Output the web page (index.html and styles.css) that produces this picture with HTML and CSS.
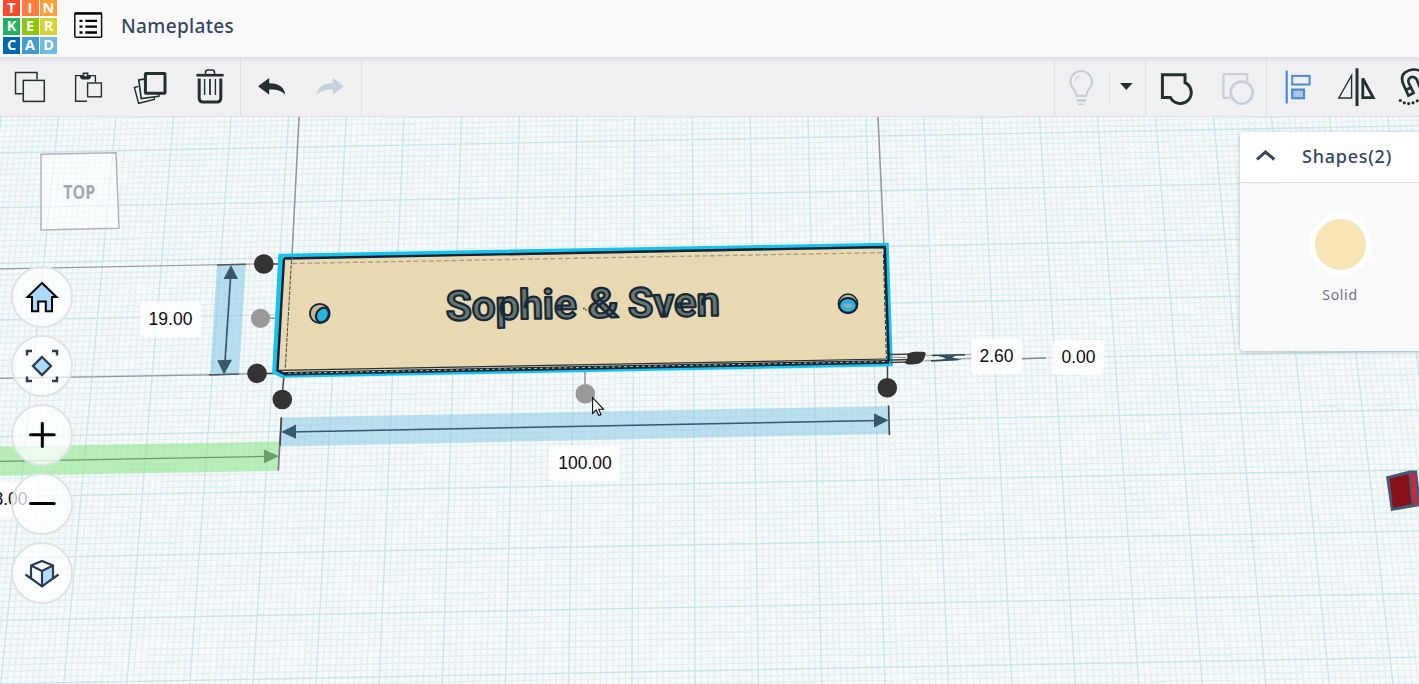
FILE: index.html
```html
<!DOCTYPE html>
<html lang="en">
<head>
<meta charset="utf-8">
<title>Nameplates</title>
<link rel="stylesheet" href="styles.css">
</head>
<body>
<div class="app">
  <header class="topbar">
    <div class="logo">
      <span class="tile t1">T</span><span class="tile t2">I</span><span class="tile t3">N</span>
      <span class="tile t4">K</span><span class="tile t5">E</span><span class="tile t6">R</span>
      <span class="tile t7">C</span><span class="tile t8">A</span><span class="tile t9">D</span>
    </div>
    <svg class="list-icon" width="30" height="28" viewBox="73 11 30 28">
      <rect x="74.8" y="13.2" width="26.8" height="24" rx="1" fill="none" stroke="#111" stroke-width="1.5"/>
      <path d="M74.5 13.5H102" stroke="#000" stroke-width="2.4"/>
      <path d="M79.5 20.8H82.5M79.5 26.7H82.5M79.5 32.5H82.5M85.3 20.8H97M85.3 26.7H97M85.3 32.5H97" stroke="#000" stroke-width="2.3"/>
    </svg>
    <h1 class="title">Nameplates</h1>
  </header>

  <nav class="toolbar">
    <div class="group">
      <svg class="tool" viewBox="0 58 60 58"><g fill="none" stroke="#233030" stroke-width="1.5"><path d="M22.5 93.8H15.5V72.6H37V79.5"/><rect x="23.3" y="80.4" width="21" height="21"/></g></svg>
      <svg class="tool" viewBox="60 58 60 58"><g fill="none" stroke="#233030" stroke-width="1.4"><path d="M87 101.2H75.6V75.6H81M90 75.6H95.4V82.5"/><rect x="87.6" y="83" width="13.8" height="13.8"/></g><path d="M80 75h2.6v-2.6h5.8V75H91v2.5l-2 2h-7l-2-2z" fill="#233030"/><rect x="84.3" y="74" width="2.4" height="2.2" fill="#f0f0f3"/></svg>
      <svg class="tool" viewBox="120 58 60 58"><g fill="none" stroke="#233030"><rect x="145.4" y="73.6" width="19.6" height="19.6" rx=".5" stroke-width="3"/><path d="M144 79.2L138.8 80L141.2 98.5L158.8 96.3V94" stroke-width="1.7"/><path d="M138.5 86.3L134.4 87.5L138.6 103.3L154.3 99.5V97.5" stroke-width="1.4"/></g></svg>
      <svg class="tool" viewBox="180 58 60 58"><g fill="none" stroke="#233030"><path d="M196.4 75.2H223.6" stroke-width="2.7"/><path d="M205.5 74V72.5Q205.5 70 208 70H212Q214.5 70 214.5 72.5V74" stroke-width="1.6"/><path d="M199.2 78.5V98Q199.2 102 203.2 102H216.8Q220.8 102 220.8 98V78.5" stroke-width="3"/><path d="M204.6 79V95M215.4 79V95" stroke-width="1.4"/><path d="M210 79V95" stroke-width="1.8"/></g></svg>
    </div>
    <div class="group">
      <svg class="tool" viewBox="241 58 60 58"><path d="M258 86.3L269.2 78V83.3C278 83 284.6 87 285.2 94.7C281 90 276 89.3 269.2 89.4V94.7Z" fill="#233030"/></svg>
      <svg class="tool" viewBox="301 58 60 58"><path d="M344 86.3L332.8 78V83.3C324 83 317.4 87 316.8 94.7C321 90 326 89.3 332.8 89.4V94.7Z" fill="#c5d0db"/></svg>
    </div>
    <div class="group push">
      <svg class="tool bulb" viewBox="1055 58 54 58"><g fill="none" stroke="#c5d0da" stroke-width="2.2"><path d="M1076.5 95.8H1086.2C1086.2 89.5 1092 89 1092 81.8A10.8 10.8 0 0 0 1070.4 81.8C1070.4 89 1076.5 89.5 1076.5 95.8Z"/><path d="M1074.8 81Q1075.5 77.5 1079.3 76.3" stroke-width="1.4"/><path d="M1076.8 100.5H1085.8" stroke-width="3"/><path d="M1078.2 104.3H1084.2" stroke-width="1.6"/></g></svg>
      <svg class="tool caret" viewBox="1109 58 36 58"><path d="M1120 83H1132.6L1126.3 90Z" fill="#233030"/></svg>
    </div>
    <div class="group">
      <svg class="tool" viewBox="1146 58 60 58"><path d="M1162.4 74.8H1185V82.6A11 11 0 1 1 1170.4 97.4H1162.4Z" fill="none" stroke="#233030" stroke-width="3"/></svg>
      <svg class="tool" viewBox="1206 58 60 58"><g fill="none" stroke="#c5d0da"><path d="M1230 97.8H1223.5V74.2H1247.3V81" stroke-width="2.2"/><circle cx="1241.7" cy="92.6" r="11" stroke-width="2.8"/></g></svg>
    </div>
    <div class="group">
      <svg class="tool" viewBox="1267 58 60 58"><g fill="none" stroke="#4c8ad8"><path d="M1286.7 70.5V103.5" stroke-width="2.2"/><rect x="1292.2" y="75.9" width="17.4" height="8.6" stroke-width="2"/><rect x="1292.2" y="89.6" width="11.8" height="8.6" fill="#adc7ea" stroke-width="2.2"/></g></svg>
      <svg class="tool" viewBox="1327 58 60 58"><g fill="none" stroke="#233030"><path d="M1357 68.3V106" stroke-width="3"/><path d="M1338.8 98H1351.6V75.5Z" stroke-width="1.4"/><path d="M1362.8 97.6V78.5L1373.2 97.6Z" stroke-width="2.8"/></g></svg>
      <svg class="tool" viewBox="1387 58 60 58"><g fill="none" stroke="#233030" stroke-width="2.7"><path d="M1424 73C1416 67.5 1409 69.5 1405 72.5C1401.5 75.5 1401.4 80 1403.4 84.5L1408.4 95.6L1413.6 93L1408.8 83C1407 78 1412.5 74.5 1416.5 79L1421 90"/><path d="M1405.8 90L1411 87.6"/></g><g fill="#233030"><circle cx="1400.3" cy="100.5" r="1.6"/><circle cx="1404.3" cy="102.8" r="1.6"/><circle cx="1408.6" cy="103.6" r="1.6"/><circle cx="1413" cy="102.8" r="1.6"/><circle cx="1417.2" cy="100.8" r="1.6"/></g></svg>
    </div>
  </nav>

  <main class="stage">
    <svg class="scene" viewBox="0 117 1419 567">
      <g fill="none">
        <path id="minor" class="minor"/>
        <path id="major" class="major"/>
      </g>
      <g stroke="#8f9698" stroke-width="1.5" fill="none">
        <path d="M299 117L292 256M878 117L884 246"/>
        <path d="M0 268.8L256 264M0 378.3L212 374.8L250 373.8" stroke="#94999b" stroke-width="1.2"/>
        <path d="M268 318.3H278M585 372V384"/>
      </g>

      <path d="M0 446.5L279.5 441.5L278 470.8L0 475.8Z" fill="#93e78f" fill-opacity=".62"/>
      <path d="M0 461.3L266 456.4" stroke="#6b9d6b" stroke-width="1.3"/>
      <path d="M264 449.5L279 456.3L264 463.3Z" fill="#6b9d6b"/>
      <path d="M281.3 417.5L278.3 470.5" stroke="#777" stroke-width="1.6"/>

      <path d="M217 265L246 264L239 374L210 375Z" fill="#8bcbe6" fill-opacity=".58"/>
      <path d="M217 265L246 264.2M209 375L239 374" stroke="#556" stroke-width="1.5"/>
      <path d="M231 270L224.5 369" stroke="#37596a" stroke-width="1.7"/>
      <path d="M231 265L238 279H223.5ZM224 374.5L217.3 360.3L232 359.8Z" fill="#37596a"/>

      <path d="M282 417.5L889 406L889.5 434L281 446.5Z" fill="#8bcbe6" fill-opacity=".55"/>
      <path d="M290 432L880 420.5" stroke="#37596a" stroke-width="1.6"/>
      <path d="M281.3 432L296 424.5V438.7ZM888.5 420.3L874 413.5V427.5Z" fill="#37596a"/>
      <path d="M281.4 417.5L280 446M888.6 405.5L889.4 435" stroke="#444" stroke-width="1.6"/>

      <path d="M268 264H280M262 373.5H276M284 374L282.5 392M887.5 363V380" stroke="#444" stroke-width="1.5"/>

      <path d="M281 256.5L886 245.5L890 363.5L282 375L275 371.5Z" fill="#e9d9b3" stroke="#19c2ec" stroke-width="5.5"/>
      <path d="M284 373.7L889 361.9" stroke="#172635" stroke-width="3.6"/>
      <path d="M278 370.4L888.5 359" stroke="#2a302e" stroke-width="1.2"/>
      <path d="M282 373.4L888 361.5" stroke="#9bb3a8" stroke-width="1.1" stroke-dasharray="3 3"/>
      <path d="M284 258.5L884.8 247L888.8 361M284 258.5L277.5 370.5L285 374.2" fill="none" stroke="#12202f" stroke-width="2.4"/>
      <path d="M292 263.5L882 252.6" stroke="#a99f86" stroke-width="1.4" stroke-dasharray="5 2.6"/>
      <path d="M291.5 260L285.2 370" stroke="#55544c" stroke-width="1.1" stroke-dasharray="4 1.2"/>
      <path d="M883.4 254L886.4 358" stroke="#27303a" stroke-width="1" stroke-dasharray="4 2"/>
      <path d="M292.4 256L291.5 262" stroke="#777" stroke-width="1"/>

      <g class="engraving">
        <text x="446" y="320.5" textLength="131" lengthAdjust="spacingAndGlyphs" transform="rotate(-1.1 446 321)">Sophie</text>
        <text x="588" y="317.8" textLength="31" lengthAdjust="spacingAndGlyphs" transform="rotate(-1.1 588 318)">&amp;</text>
        <text x="628" y="317.3" textLength="92" lengthAdjust="spacingAndGlyphs" transform="rotate(-1.1 628 318)">Sven</text>
      </g>
      <path d="M583.2 308.5h1.5M585.5 310h1" stroke="#222" stroke-width="1.3"/>

      <ellipse cx="319.8" cy="313.5" rx="9.8" ry="9.6" fill="#c6b893" stroke="#14243a" stroke-width="1.8"/>
      <ellipse cx="322.4" cy="315" rx="6" ry="7.6" transform="rotate(30 322.4 315)" fill="#2bb4dc" stroke="#14243a" stroke-width="2.2"/>
      <ellipse cx="848" cy="303.7" rx="9.7" ry="9.6" fill="#c6b893" stroke="#14243a" stroke-width="1.5"/>
      <ellipse cx="848" cy="305.5" rx="8.8" ry="7.3" fill="#2bb4dc" stroke="#14243a" stroke-width="2.2"/>
      <ellipse cx="848" cy="305.8" rx="4.5" ry="2.4" fill="#8eabb5"/>

      <path d="M890 354.5L915 354M890 360L907 359.4M890 362.6L907 362" stroke="#444" stroke-width="1.5"/>
      <path d="M891 357.3H906" stroke="#888" stroke-width="1"/>
      <path d="M907 355Q909 352 915 351.8H922Q927 352.2 925.5 355L924 359Q922.5 363.5 915 364.3Q905 365.5 905 362L907.5 358Z" fill="#333"/>
      <path d="M926 355.5L972 354.6M924 361L972 358" stroke="#999" stroke-width="1"/>
      <path d="M932 355.5L965 354.8M931 361L958 359.5" stroke="#2f4350" stroke-width="1.6"/>
      <path d="M938 356L957 355.5L952 357.5L962 360L940 360.5L946 358.3Z" fill="#2d5163"/>
      <path d="M1022 358.8L1046 358" stroke="#888" stroke-width="1.5"/>

      <g fill="#333">
        <circle cx="263.8" cy="264" r="9.8"/><circle cx="257" cy="373.4" r="9.8"/>
        <circle cx="282.3" cy="399.5" r="9.8"/><circle cx="887.3" cy="387.7" r="9.8"/>
      </g>
      <g fill="#999"><circle cx="260.5" cy="318.3" r="9.6"/><circle cx="585.3" cy="393.7" r="9.8"/></g>
      <path d="M592.6 397.6V413.4L596.2 410L598.8 415.6L601 414.6L598.7 409.3H603.6Z" fill="#fff" stroke="#111" stroke-width="1.1"/>

      <path d="M1386 476.5L1409.5 470.5H1417L1421 506L1391 511Z" fill="#455a76"/>
      <path d="M1389.5 478.5L1408.5 474L1411.5 504L1393 508Z" fill="#87121a"/>
      <path d="M1410.6 473.3H1414.6L1417.5 504.5L1414 505Z" fill="#e21f30"/>

      <path d="M41 154.3L116 152.7L119 228.3L41 230Z" fill="#fff" fill-opacity=".55" stroke="#b4b4b4" stroke-width="1.5"/>
      <text class="cube-label" x="63.3" y="198.5" textLength="32" lengthAdjust="spacingAndGlyphs">TOP</text>
    </svg>

    <span class="dim dim-depth">19.00</span>
    <span class="dim dim-width">100.00</span>
    <span class="dim dim-height">2.60</span>
    <span class="dim dim-lift">0.00</span>
    <span class="dim dim-offset">8.00</span>

    <div class="view-controls">
      <button class="round"><svg viewBox="0 0 58 58"><path d="M29 15L14.5 29H19V43.3H25.2V33.5H32.8V43.3H39V29H43.5Z" fill="#abdaff" stroke="#000" stroke-width="2"/></svg></button>
      <button class="round"><svg viewBox="0 0 58 58"><path d="M29 20L38 29L29 38L20 29Z" fill="#abdaff" stroke="#2b3d54" stroke-width="2.3"/><path d="M14 18.5V14H19M39 14H44V18.5M14 39.5V44H19M39 44H44V39.5" fill="none" stroke="#2b3d54" stroke-width="2.4"/></svg></button>
      <button class="round"><svg viewBox="0 0 58 58"><path d="M29.3 17.2V40.5M17.5 28.8H41.2" stroke="#000" stroke-width="3" stroke-linecap="round"/></svg></button>
      <button class="round"><svg viewBox="0 0 58 58"><path d="M17.5 28.6H41.2" stroke="#000" stroke-width="3" stroke-linecap="round"/></svg></button>
      <button class="round"><svg viewBox="0 0 58 58"><path d="M29 27V41.5L40 34V21Z" fill="#b5dcff"/><g fill="none" stroke="#2b3d54" stroke-width="2.2"><path d="M18 21.5L29 17L40 21.5V34.5L29 42.5L18 34.5ZM18 21.5L29 27L40 21.5M29 27V42.5M12.5 30.5L18 34.5M45.5 30.5L40 34.5"/></g></svg></button>
    </div>

    <aside class="panel">
      <div class="panel-head">
        <svg class="chevron" width="20" height="12" viewBox="1256 150 20 12"><path d="M1257 159.5L1265.5 152L1274.3 159.5" fill="none" stroke="#34465c" stroke-width="3"/></svg>
        <h2 class="panel-title">Shapes(2)</h2>
      </div>
      <div class="panel-body">
        <span class="swatch"></span>
        <span class="swatch-label">Solid</span>
      </div>
    </aside>
  </main>
</div>
<script src="grid.js"></script>
</body>
</html>
```
FILE: styles.css
```css
* { box-sizing: border-box; }
body { margin: 0; font-family: "Noto Sans", sans-serif; }
.app { width: 1419px; height: 684px; display: flex; flex-direction: column; overflow: hidden; background: #f8f9f9; }
.topbar { height: 57px; flex: none; display: flex; align-items: flex-start; background: #fafafa; padding-left: 3px; }
.logo { display: grid; grid-template-columns: repeat(3, 17px); grid-template-rows: 16px 17px 17px; gap: 2px 1.5px; background: #fff; }
.tile { color: #fff; font: bold 14.5px/16px "Open Sans", sans-serif; text-align: center; }
.t1 { background: #ff4828; } .t2 { background: #ff7d3c; } .t3 { background: #ff9d38; }
.t4 { background: #24b35c; } .t5 { background: #8cc90c; } .t6 { background: #d5d234; }
.t7 { background: #0067b3; } .t8 { background: #439bd0; } .t9 { background: #6fbce0; }
.list-icon { margin: 11px 0 0 16px; }
.title { margin: 12px 0 0 18px; font-size: 19px; line-height: 28px; font-weight: 500; color: #34465f; letter-spacing: .35px; }

.toolbar { height: 60px; flex: none; display: flex; background: #f0f0f3; border-top: 1px solid #dcdfe6; border-bottom: 1px solid #dcdfe3; box-shadow: inset 0 3px 3px -1px #dfe1e9; overflow: hidden; }
.group { display: flex; flex: none; align-items: stretch; }
.group + .group { border-left: 1px solid #dbe0e5; }
.group:nth-child(2) { border-right: 1px solid #dbe0e5; }
.tool { width: 60px; height: 58px; flex: none; display: block; }
.push { margin-left: auto; }
.group:last-child { width: 153px; overflow: hidden; }
.bulb { width: 54px; }
.caret { width: 36px; height: 58px; background: linear-gradient(#dadfe4, #dadfe4) 0 15px / 1px 30px no-repeat; }

.stage { flex: 1; position: relative; overflow: hidden; }
.scene { display: block; width: 1419px; height: 567px; }
.minor { stroke: #bfe4f0; stroke-opacity: .4; stroke-width: 1.3; }
.major { stroke: #a8d8e5; stroke-opacity: .58; stroke-width: 1.4; }
.engraving { font: bold 41px Roboto, sans-serif; fill: #66776c; stroke: #18283a; stroke-width: 2.2px; stroke-linejoin: round; }
.cube-label { font: bold 19px "Open Sans", sans-serif; fill: #a3a9ae; }

.dim { position: absolute; height: 35px; border-radius: 4px; background: rgba(255,255,255,.85); color: #0d0d0d; font: 17.5px/34px "Liberation Sans", Arial, sans-serif; text-align: center; }
.dim-depth { left: 140px; top: 185px; width: 61px; }
.dim-width { left: 549px; top: 329px; width: 71px; padding-left: 1px; }
.dim-height { left: 971px; top: 222px; width: 51px; }
.dim-lift { left: 1053px; top: 223px; width: 51px; }
.dim-offset { left: -15px; top: 365px; width: 51px; }

.view-controls { position: absolute; left: 11px; top: 149px; display: flex; flex-direction: column; gap: 7px; }
.round { width: 62px; height: 62px; padding: 0; border: 2px solid #e0e3e4; border-radius: 50%; background: rgba(255,255,255,.72); }
.round svg { display: block; width: 58px; height: 58px; }

.panel { position: absolute; left: 1240px; top: 15px; width: 200px; height: 219px; border-radius: 4px; overflow: hidden; display: flex; flex-direction: column; box-shadow: 0 1px 4px rgba(80,100,120,.4); }
.panel-head { height: 51px; display: flex; align-items: center; padding-left: 16px; gap: 26px; background: #fff; border-bottom: 1px solid #dde0ea; }
.chevron { margin-top: -2px; }
.panel-title { margin: -2px 0 0; font-size: 18px; line-height: 26px; font-weight: 500; color: #34465f; letter-spacing: .75px; }
.panel-body { flex: 1; display: flex; flex-direction: column; align-items: center; background: rgba(249,250,250,.94); padding-top: 30px; }
.swatch { width: 63px; height: 63px; border: 6px solid #fff; border-radius: 50%; background: #f8e5b5; }
.swatch-label { margin-top: 9px; font-size: 14px; line-height: 20px; color: #6a7380; letter-spacing: .7px; }
```
FILE: grid.js
```js
// Workplane grid in perspective: maps workplane cells (u, v) to screen points.
const U = 17, V = 9;
const [p0, p1, p2, p3] = [[344.7, 146.3], [1330.7, 127.3], [1390, 657.7], [316.3, 678]];
const dx1 = p1[0] - p2[0], dx2 = p3[0] - p2[0], sx = p0[0] - p1[0] + p2[0] - p3[0];
const dy1 = p1[1] - p2[1], dy2 = p3[1] - p2[1], sy = p0[1] - p1[1] + p2[1] - p3[1];
const det = dx1 * dy2 - dx2 * dy1;
const g = (sx * dy2 - dx2 * sy) / det, h = (dx1 * sy - sx * dy1) / det;
const a = p1[0] - p0[0] + g * p1[0], b = p3[0] - p0[0] + h * p3[0];
const d = p1[1] - p0[1] + g * p1[1], e = p3[1] - p0[1] + h * p3[1];

function project(u, v) {
  const s = u / U, t = v / V, w = g * s + h * t + 1;
  return ((a * s + b * t + p0[0]) / w).toFixed(2) + ' ' + ((d * s + e * t + p0[1]) / w).toFixed(2);
}

let minor = '', major = '';
for (let i = -80; i <= 210; i++) {
  const line = 'M' + project(i / 10, -2) + 'L' + project(i / 10, 11);
  if (i % 10 === 0) major += line; else minor += line;
}
for (let j = -20; j <= 110; j++) {
  const line = 'M' + project(-8, j / 10) + 'L' + project(21, j / 10);
  if (j % 10 === 0) major += line; else minor += line;
}
document.getElementById('minor').setAttribute('d', minor);
document.getElementById('major').setAttribute('d', major);
```
